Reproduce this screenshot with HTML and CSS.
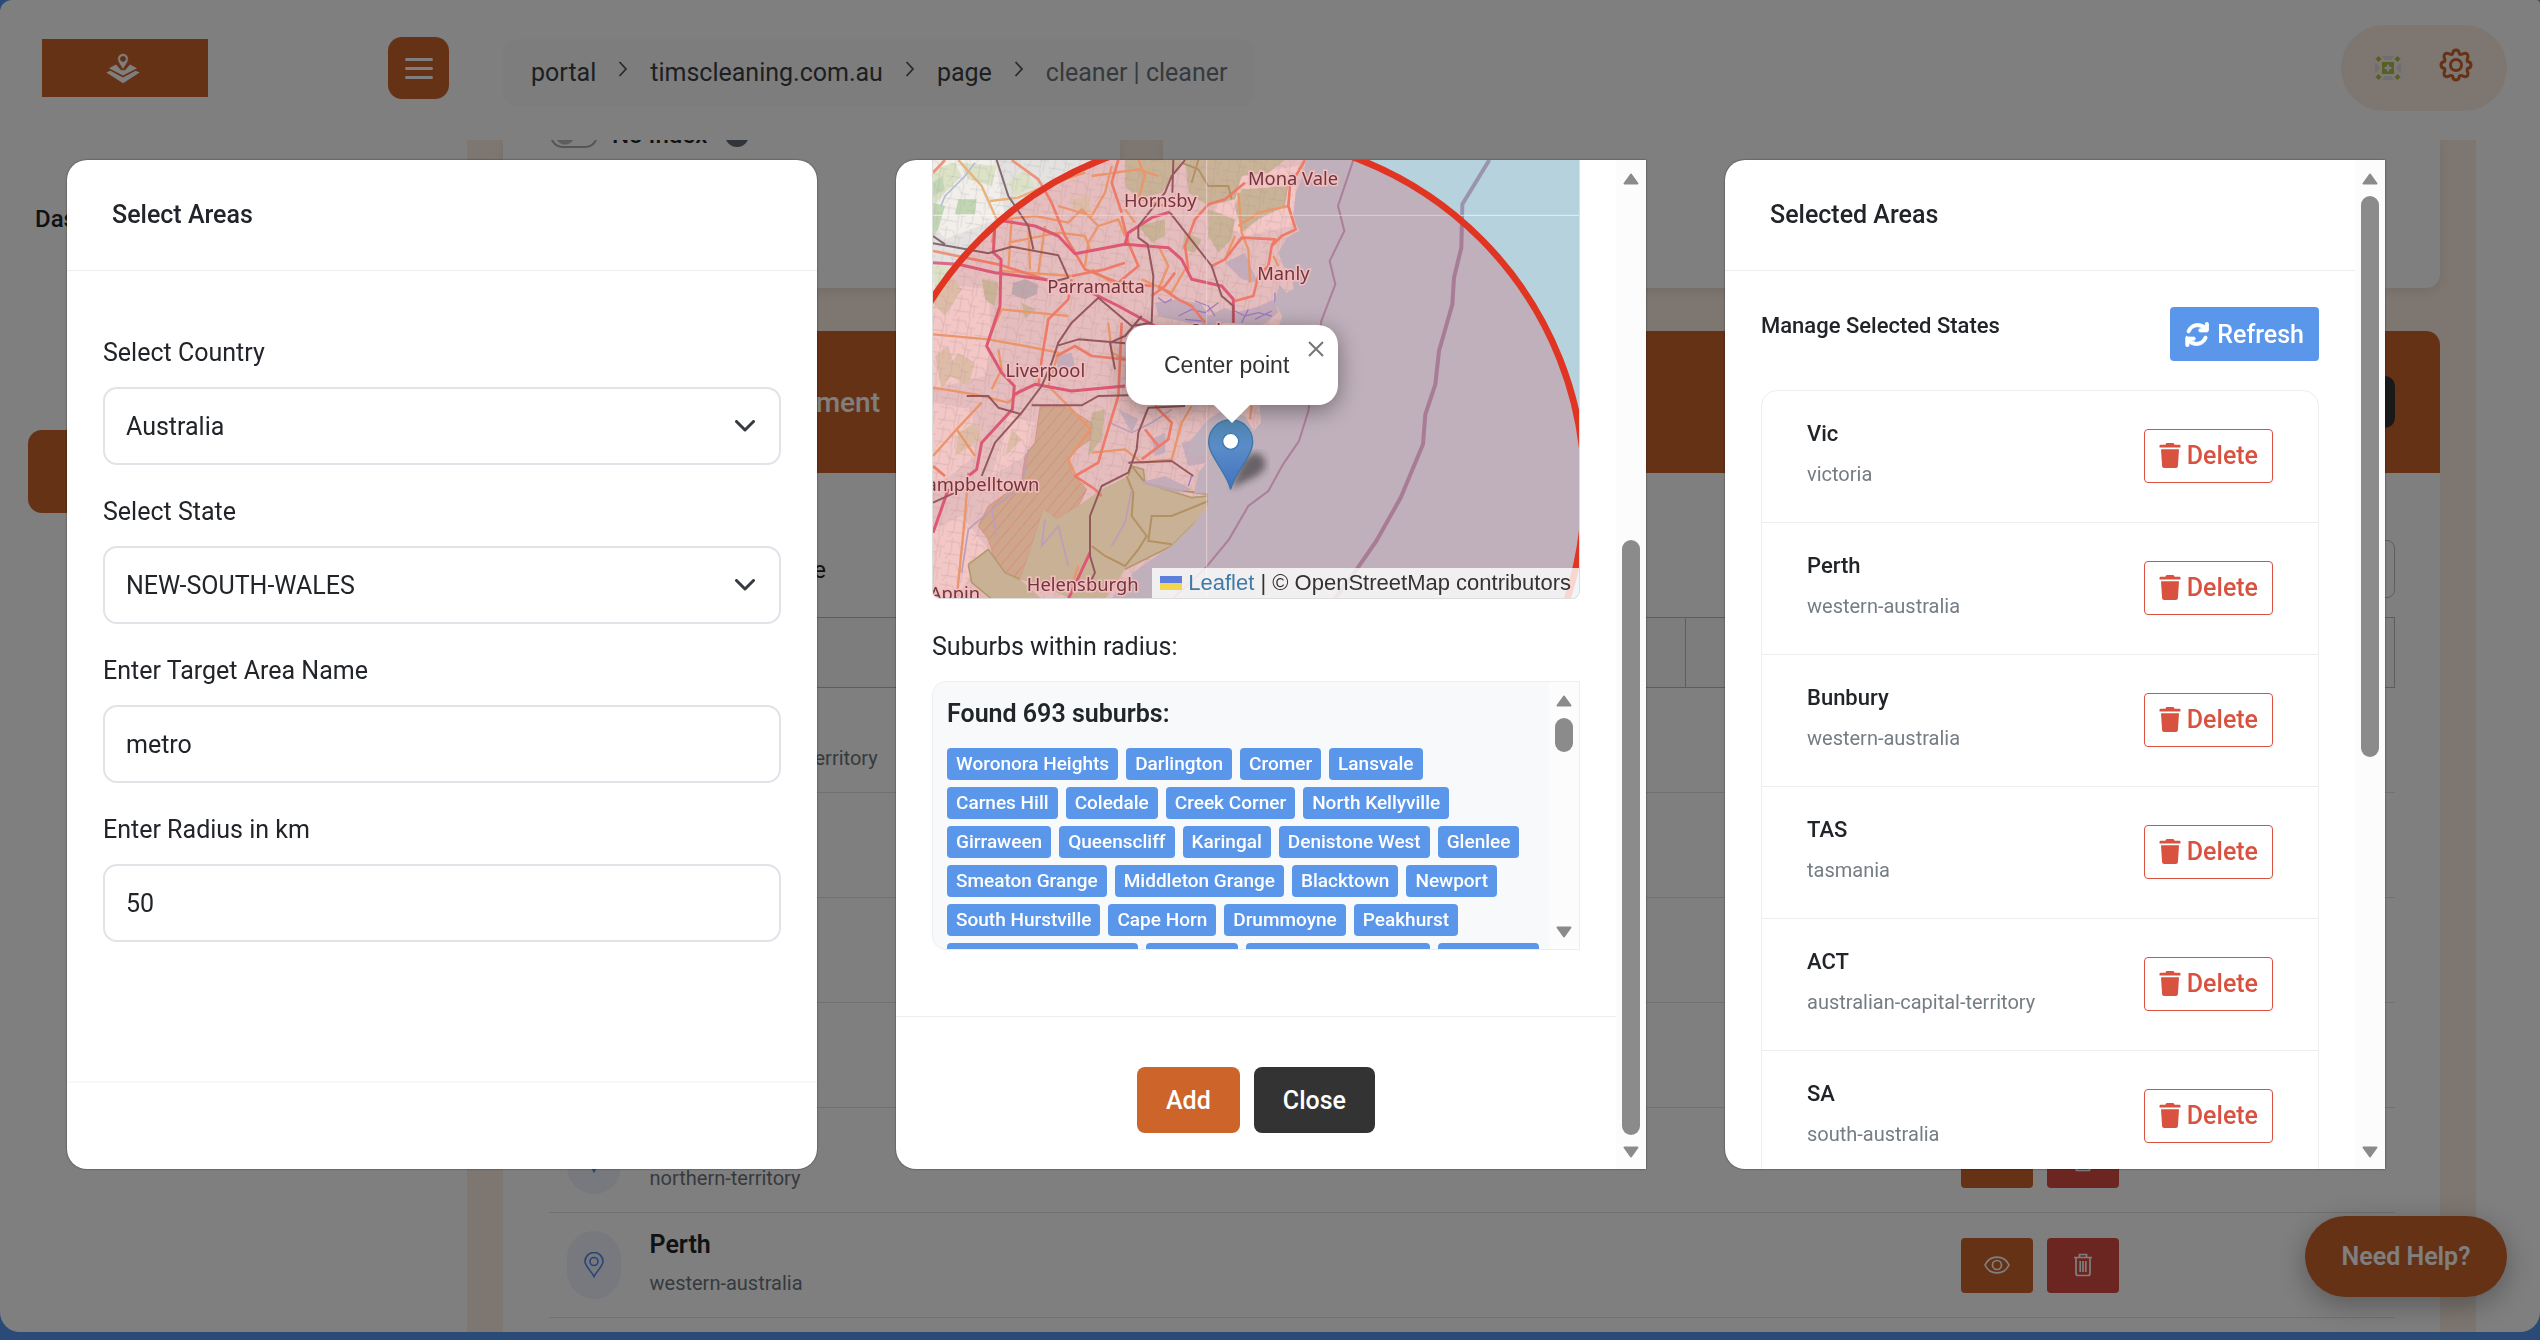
FILE: index.html
```html
<!DOCTYPE html>
<html lang="en">
<head>
<meta charset="utf-8">
<title>Areas</title>
<link rel="stylesheet" href="styles.css">
</head>
<body>
<svg class="defs" aria-hidden="true">
  <symbol id="trash" viewBox="0 0 22 25"><path d="M7.500 0h7l1.200 1.800H20.500a1 1 0 0 1 1 1v1.700H.5V2.800a1 1 0 0 1 1-1h4.800zM2 6.200h18l-1.100 17a2 2 0 0 1-2 1.800H5.100a2 2 0 0 1-2-1.800z" fill="currentColor"/></symbol>
  <symbol id="bin" viewBox="0 0 20 24"><path d="M1 4.500h18M6.500 4V1.500h7V4M3 5v15.500a2 2 0 0 0 2 2h10a2 2 0 0 0 2-2V5M7.200 8v11M10 8v11M12.800 8v11" fill="none" stroke="currentColor" stroke-width="1.700"/></symbol>
  <symbol id="eye" viewBox="0 0 26 18"><path d="M1 9C6-1.500 20-1.500 25 9 20 19.500 6 19.500 1 9z" fill="none" stroke="currentColor" stroke-width="1.700"/><circle cx="13" cy="9" r="4.500" fill="none" stroke="currentColor" stroke-width="1.700"/></symbol>
  <symbol id="pin" viewBox="0 0 20 26"><path d="M10 24.500C8 20 1 14 1 9.500a9 9 0 0 1 18 0C19 14 12 20 10 24.500z" fill="none" stroke="currentColor" stroke-width="1.600"/><circle cx="10" cy="9.500" r="4" fill="none" stroke="currentColor" stroke-width="1.600"/></symbol>
  <symbol id="chevron" viewBox="0 0 20 12"><path d="M1.500 1.500 10 10l8.500-8.500" fill="none" stroke="currentColor" stroke-width="3" stroke-linecap="round" stroke-linejoin="round"/></symbol>
  <symbol id="crumb" viewBox="0 0 10 16"><path d="M1.500 1 8 8l-6.500 7" fill="none" stroke="currentColor" stroke-width="1.800"/></symbol>
  <symbol id="up" viewBox="0 0 16 12"><path d="M8 1.500 14.500 10.500h-13z" fill="currentColor" stroke="currentColor" stroke-width="2" stroke-linejoin="round"/></symbol>
  <symbol id="down" viewBox="0 0 16 12"><path d="M8 10.500 14.500 1.500h-13z" fill="currentColor" stroke="currentColor" stroke-width="2" stroke-linejoin="round"/></symbol>
</svg>

<div class="shell">
  <header class="topbar">
    <div class="brand">
      <div class="logo">
        <svg width="34" height="31" viewBox="0 0 102 92"><path d="M9 45 30 34l15 17h12l15-17 21 11-42 22z" fill="#fff"/><path d="M1 58l12-5 38 20 38-20 12 5-50 32z" fill="#fff"/><path fill-rule="evenodd" d="M51 50C46 38 35 28 35 17a16 16 0 0 1 32 0C67 28 56 38 51 50zM51 9a8 8 0 1 0 .1 0z" fill="#fff" stroke="#cd652b" stroke-width="2"/></svg>
      </div>
      <button class="menu" aria-label="Menu"><i></i><i></i><i></i></button>
    </div>
    <nav class="crumbs">
      <a href="#">portal</a><svg class="sep"><use href="#crumb"/></svg>
      <a href="#">timscleaning.com.au</a><svg class="sep"><use href="#crumb"/></svg>
      <a href="#">page</a><svg class="sep"><use href="#crumb"/></svg>
      <span>cleaner | cleaner</span>
    </nav>
    <div class="tools">
      <svg width="26" height="24" viewBox="0 0 26 24"><path d="M7 0h12l-3 4h-6zM7 24h12l-3-4h-6zM0 6l5 6-5 6zM26 6l-5 6 5 6z" fill="#d8dde0"/><path d="M7 6h12v12H7z" fill="#b3bd4c"/><path d="M3.500 0 6.500 3l-3 3-3-3zM22.500 0l3 3-3 3-3-3zM3.500 18l3 3-3 3-3-3zM22.500 18l3 3-3 3-3-3z" fill="#b3bd4c"/><path d="M13 7.500l1.500 3 3 1.500-3 1.500-1.500 3-1.500-3-3-1.500 3-1.500z" fill="#eee"/></svg>
      <svg class="gear" width="34" height="34" viewBox="0 0 34 34"><path d="M17 2 Q20 2 20.500 6 Q22 7 25 5.500 Q29 4.500 29 9 Q27.500 12 28.500 13.500 Q32 14 32 17 Q32 20 28.500 20.500 Q27.500 22 29 25 Q29 29.500 25 28.500 Q22 27 20.500 28 Q20 32 17 32 Q14 32 13.500 28 Q12 27 9 28.500 Q5 29.500 5 25 Q6.500 22 5.500 20.500 Q2 20 2 17 Q2 14 5.500 13.500 Q6.500 12 5 9 Q5 4.500 9 5.500 Q12 7 13.500 6 Q14 2 17 2z"/><circle cx="17" cy="17" r="5.500"/></svg>
    </div>
  </header>

  <div class="columns">
    <aside class="sidebar">
      <p>Dashboard</p>
      <div class="side-active"></div>
    </aside>
    <main class="content">
      <div class="cards">
        <section class="card">
          <label class="noindex"><input type="checkbox" role="switch">No Index <i class="info"></i></label>
        </section>
        <section class="card"></section>
      </div>
      <section class="panel">
        <div class="panel-head"><h2>Area Management</h2><button class="dark" aria-label="Add"></button></div>
        <div class="filter"><label for="search">Search Area Name</label><input id="search" type="search"></div>
        <table>
          <thead><tr><th></th><th></th></tr></thead>
          <tbody>
            <tr><td><div class="place"><span class="dot"><svg><use href="#pin"/></svg></span><div><b>ACT</b><small>australian-capital-territory</small></div></div></td><td></td></tr>
            <tr><td></td><td></td></tr>
            <tr><td></td><td></td></tr>
            <tr><td></td><td></td></tr>
            <tr><td><div class="place"><span class="dot"><svg><use href="#pin"/></svg></span><div><b>NT</b><small>northern-territory</small></div></div></td><td><div class="acts"><button class="view" aria-label="View"><svg><use href="#eye"/></svg></button><button class="del" aria-label="Delete"><svg><use href="#bin"/></svg></button></div></td></tr>
            <tr><td><div class="place"><span class="dot"><svg><use href="#pin"/></svg></span><div><b>Perth</b><small>western-australia</small></div></div></td><td><div class="acts"><button class="view" aria-label="View"><svg><use href="#eye"/></svg></button><button class="del" aria-label="Delete"><svg><use href="#bin"/></svg></button></div></td></tr>
          </tbody>
        </table>
      </section>
    </main>
  </div>
  <button class="help">Need Help?</button>
</div>

<div class="overlay">
  <section class="modal">
    <div class="pane">
      <h3 class="title">Select Areas</h3>
      <form class="form">
        <label for="country">Select Country</label>
        <div class="select"><select id="country"><option>Australia</option></select><svg><use href="#chevron"/></svg></div>
        <label for="state">Select State</label>
        <div class="select"><select id="state"><option>NEW-SOUTH-WALES</option></select><svg><use href="#chevron"/></svg></div>
        <label for="area">Enter Target Area Name</label>
        <input id="area" type="text" value="metro">
        <label for="radius">Enter Radius in km</label>
        <input id="radius" type="text" value="50">
      </form>
      <div class="foot empty"></div>
    </div>
  </section>

  <section class="modal scrolls">
    <div class="pane">
      <div class="radius">
        <div class="map">
          <svg class="tiles" viewBox="24 12 1938 1317" preserveAspectRatio="xMinYMin slice">
            <defs>
              <pattern id="hatch" width="26" height="26" patternUnits="userSpaceOnUse" patternTransform="rotate(40)"><path d="M0 0V26" stroke="#d88a7c" stroke-width="5" opacity=".5"/></pattern>
              <pattern id="streets" width="74" height="66" patternUnits="userSpaceOnUse" patternTransform="rotate(8)"><path d="M0 12H40L48 30H74M20 0V44L6 66M54 0L50 66M0 50H50M62 30V66" fill="none" stroke="#aaa3a6" stroke-width="2" opacity=".45"/></pattern>
              <linearGradient id="pinfill" x1="0" y1="0" x2="0" y2="1"><stop offset="0" stop-color="#4f86ae"/><stop offset=".4" stop-color="#5a8cc8"/><stop offset="1" stop-color="#4272c0"/></linearGradient>
              <filter id="soft"><feGaussianBlur stdDeviation="11"/></filter>
              <clipPath id="landclip"><path d="M24 12H1142L1135 60 1112 110 1105 180 1122 225 1085 245 1060 290 1075 330 1102 350 1105 400 1085 410 1062 384 1050 440 1072 480 1058 520 1010 560 1000 700 1008 800 985 825 960 780 900 760 850 790 800 850 790 900 860 900 820 950 808 1012 848 1012 850 1050 800 1110 740 1170 650 1230 590 1280 560 1329H24z"/></clipPath>
            </defs>
            <path d="M0 0H2000V1400H0z" fill="#b5d2dd"/>
            <g clip-path="url(#landclip)">
              <path d="M0 0H1300V1400H0z" fill="#e4e2e0"/>
              <g fill="#f2eeea"><path d="M24 12H210L240 180 60 250 24 200zM24 380 190 400 200 560 180 660 24 700zM24 740 140 760 150 900 24 1000zM24 1120 110 1080 190 1180 90 1329 24 1329zM250 780 330 800 300 900 200 960zM440 1080 520 1020 480 1200 420 1240zM860 190 920 60 1120 30 1100 210 960 240z"/></g>
              <g fill="#dbe2c6"><path d="M24 40 90 20 110 60 60 110 24 150zM110 20 215 30 200 90 130 70zM60 330 110 400 60 480 24 440zM100 590 150 620 130 690 60 650zM24 330H70L30 400zM250 80 300 40 330 90 270 120zM30 600 70 570 90 640 50 700zM100 830 150 800 170 850 90 900zM430 130 490 120 500 170 450 160zM260 820 290 850 240 900z"/></g>
              <g fill="#c1d6b2"><path d="M600 12H770L740 70 710 110 640 130 600 90zM780 12H1080L1030 50 950 60 930 130 850 150 790 110zM950 100 1090 90 1080 150 1000 190 950 230 930 150zM850 160 930 190 920 250 880 290 850 240zM24 140 60 150 40 220 24 240zM640 210 720 190 720 240 680 260zM780 230 830 250 810 290 770 280zM290 440 330 460 300 490zM500 770 540 760 530 850 490 900zM170 370 220 380 210 450 180 430zM24 80 50 60 60 100 24 120zM100 130 155 130 150 175 90 175z"/></g>
              <path d="M265 380 300 370 338 385 335 415 300 430 260 415z" fill="#b4c8cb"/>
              <path d="M24 12H1150V1329H24z" fill="url(#streets)"/>
              <path d="M345 752 420 752 500 800 495 850 430 900 440 950 485 1000 460 1050 395 1090 355 1060 310 1200 285 1270 240 1250 205 1200 190 1150 160 1110 190 1050 290 980 300 900 330 860z" fill="#c8c6a5"/>
              <path d="M345 752 420 752 500 800 495 850 430 900 440 950 485 1000 460 1050 395 1090 355 1060 310 1200 285 1270 240 1250 205 1200 190 1150 160 1110 190 1050 290 980 300 900 330 860z" fill="url(#hatch)" stroke="#d5a08e" stroke-width="2"/>
              <path d="M355 1060 395 1090 460 1050 530 1000 610 960 620 930 655 940 660 980 720 1000 800 1025 850 1020 850 1060 740 1170 600 1240 540 1329H440L350 1290 285 1270 310 1200zM130 1225 190 1180 240 1250 285 1270 350 1329H200L140 1280z" fill="#c1d3b0"/>
              <path d="M130 1225 190 1180 240 1250 285 1270M610 960 620 930 655 940 660 980 720 1000 800 1025 850 1020 850 1060 740 1170 600 1240M130 1225 140 1280 200 1329" fill="none" stroke="#aab67f" stroke-width="5"/>
              <g fill="none" stroke="#a9ad74" stroke-width="6"><path d="M620 930 660 980 740 1000 850 1015M850 1035 740 1080 680 1080 670 1155 740 1165M500 1170 540 1200 600 1230 640 1180 665 1140 620 1080 625 1010 605 960M770 20 820 40 850 90 910 90 920 130M820 12 800 80"/></g>
              <g fill="#b5c9dc" opacity=".85"><path d="M690 440 760 430 830 445 850 480 900 455 930 470 990 455 1050 430 1060 470 1010 510 900 500 830 510 700 480zM900 320 960 290 980 340 1000 380 950 370zM390 600 440 590 450 630 400 640zM580 760 640 790 620 830zM680 850 720 830 720 890 690 900zM770 860 870 840 850 920 790 930zM640 980 720 960 800 1000 760 1010z"/></g>
              <g fill="none" stroke="#8c93e6" stroke-width="4"><path d="M700 425 720 440 740 430M810 435 850 450 870 480M760 480 800 460 840 470 880 440M930 465 960 480 1000 470 1040 480M950 500 970 460M1050 410 1050 440M780 490 830 495M990 490 1040 465M800 960 790 990"/></g>
              <g fill="none" stroke="#b3bcd8" stroke-width="5"><path d="M110 1250 130 1120 200 1060 290 990 310 880M360 1090 350 1170 400 1110 430 1230M620 1000 600 1100 560 1170M555 800 620 830 680 800 740 760M48 150 60 120 120 60 150 20M200 1060 215 1140"/></g>
              <g fill="none" stroke="#e9b27c" stroke-width="7" stroke-linejoin="round"><path d="M100 12 170 90 215 190 200 260M195 135 280 125 360 90 480 50M24 535 190 550 230 460 330 470 430 480M24 695 150 715 250 740 290 700M190 550 300 570 400 590 370 690 440 760 495 820 430 910 450 955M170 740 95 820 24 900M95 820 150 900M130 950 120 1080 95 1329M240 190 330 180 430 200 470 160 520 210 580 190 600 240M260 190 250 340M310 200 315 340M360 210 340 350M250 260 400 230 480 240 495 280M230 345 440 360M400 150 500 180 540 110 560 30M520 210 490 260 480 330M640 130 660 60 640 12M500 60 640 40 700 60M630 200 600 160M700 270 730 330 700 400M780 340 740 410 650 370M940 110 950 230 970 280 975 380M500 890 600 880 650 920 740 910 770 800 800 750M550 500 560 590 620 620M1045 300 1060 330M980 750 975 790M500 340 560 380 620 400M220 580 230 640 200 700M650 130 720 150M930 240 900 310M460 1230 440 1290M1090 150 1000 170 940 210"/></g>
              <g fill="none" stroke="#ee927a" stroke-width="8" stroke-linejoin="round"><path d="M260 12 340 70 380 140 420 240 480 340 580 380 680 390M24 285 220 325 360 370M24 50 60 12M440 370 430 430 370 490 350 610 340 690M395 600 450 570 500 600 600 610M590 500 580 720 540 850 520 920 450 960 510 1000 530 1020M850 145 810 190 780 270 790 340M850 145 900 130 960 80M1140 12 1095 90 1090 150 1112 220 1070 240 1040 270 1050 250 950 245 900 310 860 330M1040 270 1030 330 1000 360 985 420 930 435M590 180 610 260 640 330 580 380M700 390 760 430 800 450 840 500M690 750 740 800 730 850 650 910M440 360 540 340 600 320M580 12 560 80 590 170M750 350 720 390 680 420M24 930 60 960M660 820 700 870"/></g>
              <g fill="none" stroke="#d96a87" stroke-width="9" stroke-linejoin="round"><path d="M24 320 100 325 210 350 370 372M235 195 330 210 400 240 450 293 600 265 610 230 680 185 735 168M600 265 730 275 770 310 800 370 890 390 925 430 925 500M210 200 205 290 228 310 225 450 185 570 230 650 268 690 262 760 170 860 155 940 130 960M268 715 330 685 440 705 600 690M480 400 580 450 690 510M24 1130 70 1000M430 1329 495 1190"/></g>
              <g fill="none" stroke="#83696c" stroke-width="6" stroke-linejoin="round"><path d="M215 12 250 120 310 210 325 280M24 262 190 292 260 272 400 298 430 365 370 380M780 12 740 60 720 110 640 210 640 245 668 265 685 360 680 500 620 510 520 425 440 500 400 560 380 620 350 690 290 770 210 860 170 960M735 170 860 330 890 420 925 450 925 500M400 568 460 550 600 562M650 480 600 540 555 560 570 640M320 748 470 748 520 720 610 718M125 720 190 720 220 755 290 775M780 750 670 755 640 830 635 880 610 950 530 990 495 1080 495 1200 510 1250 490 1290M610 920 740 915 805 960M24 1040 90 1010M24 240 60 265M745 12 742 110"/></g>
            </g>
            <path d="M1285 12 1239 150 1258 225 1214 315 1231 385 1189 495 1170 640 1150 765 1122 855 1074 925 1030 1005 970 1050 912 1150 838 1240 742 1329" fill="none" stroke="#9c88a6" stroke-width="6" opacity=".8"/>
            <path d="M1693 12 1612 145 1609 275 1587 365 1582 445 1542 585 1531 685 1501 775 1494 865 1427 1025 1354 1155 1295 1240 1229 1329" fill="none" stroke="#9384a4" stroke-width="12" stroke-linejoin="round" opacity=".8"/>
            <path d="M845 12V1329M24 178H1962" stroke="#f4ffff" stroke-width="3" opacity=".7"/>
            <g class="towns" text-anchor="middle"><text x="1104" y="87">Mona Vale</text><text x="706" y="153">Hornsby</text><text x="1075" y="373">Manly</text><text x="513" y="410">Parramatta</text><text x="361" y="663">Liverpool</text><text x="156" y="1004">Campbelltown</text><text x="473" y="1305">Helensburgh</text><text x="90" y="1332">Appin</text><text x="888" y="542">Sydney</text></g>
            <circle cx="917" cy="1000" r="1062" fill="#f4000c" fill-opacity=".16" stroke="#e03522" stroke-width="20"/>
            <path d="M917 998 950 920Q990 870 1015 905T975 970z" fill="#222" opacity=".55" filter="url(#soft)"/>
            <path d="M917 1000C905 950 851 900 851 857a66 66 0 0 1 132 0C983 900 929 950 917 1000z" fill="url(#pinfill)" stroke="#3e76a6" stroke-width="4"/>
            <circle cx="917" cy="856" r="24" fill="#fff" stroke="#3c79b4" stroke-width="4"/>
          </svg>
          <div class="popup">Center point<button aria-label="Close popup"><svg viewBox="0 0 16 16"><path d="M1 1l14 14M15 1 1 15" stroke="currentColor" stroke-width="2"/></svg></button></div>
          <div class="credit"><svg width="22" height="14"><path d="M0 0h22v7H0z" fill="#5f7fdc"/><path d="M0 7h22v7H0z" fill="#f3d54e"/></svg><a href="#">Leaflet</a> | © OpenStreetMap contributors</div>
        </div>
        <p class="caption">Suburbs within radius:</p>
        <div class="suburbs">
          <div class="found">
            <strong>Found 693 suburbs:</strong>
            <div class="tags">
              <div><span>Woronora Heights</span><span>Darlington</span><span>Cromer</span><span>Lansvale</span></div>
              <div><span>Carnes Hill</span><span>Coledale</span><span>Creek Corner</span><span>North Kellyville</span></div>
              <div><span>Girraween</span><span>Queenscliff</span><span>Karingal</span><span>Denistone West</span><span>Glenlee</span></div>
              <div><span>Smeaton Grange</span><span>Middleton Grange</span><span>Blacktown</span><span>Newport</span></div>
              <div><span>South Hurstville</span><span>Cape Horn</span><span>Drummoyne</span><span>Peakhurst</span></div>
              <div><span>Macquarie Links Hill</span><span>Bexley N</span><span>Wetherill Park West</span><span>Five Dock</span></div>
            </div>
          </div>
          <div class="bar short"><svg><use href="#up"/></svg><i></i><svg><use href="#down"/></svg></div>
        </div>
      </div>
      <div class="foot"><button class="add">Add</button><button class="close">Close</button></div>
    </div>
    <div class="bar low"><svg><use href="#up"/></svg><i></i><svg><use href="#down"/></svg></div>
  </section>

  <section class="modal scrolls">
    <div class="pane">
      <h3 class="title">Selected Areas</h3>
      <div class="manage">
        <div class="manage-head"><h4>Manage Selected States</h4>
          <button class="refresh"><svg viewBox="0 0 512 512"><path d="M105 203c22-63 82-107 151-107 41 0 79 16 108 43l-52 0c-18 0-32 14-32 32s14 32 32 32H448c18 0 32-14 32-32V35c0-18-14-32-32-32s-32 14-32 32v51C374 50 317 32 256 32 160 32 76 93 45 182c-6 17 3 35 20 41s34-3 40-20zM39 289c-14 3-23 16-23 31v155c0 18 14 32 32 32s32-14 32-32v-49c43 35 99 54 160 54 96 0 180-61 211-150 6-17-3-35-20-41s-35 3-41 20c-22 63-81 107-150 107-41 0-80-16-109-43l49 0c18 0 32-14 32-32s-14-32-32-32H48c-3 0-6-1-9 0z" fill="currentColor" stroke="currentColor" stroke-width="18"/></svg>Refresh</button></div>
        <ul class="states">
          <li><div><b>Vic</b><small>victoria</small></div><button><svg><use href="#trash"/></svg>Delete</button></li>
          <li><div><b>Perth</b><small>western-australia</small></div><button><svg><use href="#trash"/></svg>Delete</button></li>
          <li><div><b>Bunbury</b><small>western-australia</small></div><button><svg><use href="#trash"/></svg>Delete</button></li>
          <li><div><b>TAS</b><small>tasmania</small></div><button><svg><use href="#trash"/></svg>Delete</button></li>
          <li><div><b>ACT</b><small>australian-capital-territory</small></div><button><svg><use href="#trash"/></svg>Delete</button></li>
          <li><div><b>SA</b><small>south-australia</small></div><button><svg><use href="#trash"/></svg>Delete</button></li>
        </ul>
      </div>
    </div>
    <div class="bar high"><svg><use href="#up"/></svg><i></i><svg><use href="#down"/></svg></div>
  </section>
</div>
</body>
</html>
```
FILE: styles.css
```css
* { box-sizing: border-box; }
body {
  margin: 0;
  height: 100vh;
  overflow: hidden;
  padding-bottom: 8px;
  background: #5496ee;
  font-family: Roboto, sans-serif;
  font-size: 25px;
  color: #212529;
}
h2, h3, h4, p, ul { margin: 0; padding: 0; }
button, input, select { font: inherit; color: inherit; border: 0; margin: 0; }
button { padding: 0; display: flex; align-items: center; justify-content: center; }
a { color: inherit; text-decoration: none; }
svg { display: block; flex: none; }
.defs { position: absolute; width: 0; height: 0; }

/* page behind the dialogs */
.shell {
  height: 100%;
  display: flex;
  flex-direction: column;
  background: #fff;
  border-radius: 12px 4px 20px 20px;
  overflow: hidden;
}
.topbar {
  flex: none;
  height: 140px;
  padding: 25px 33px 0 42px;
  display: flex;
  align-items: flex-start;
}
.brand { width: 407px; padding-top: 12px; display: flex; justify-content: space-between; }
.logo { width: 166px; height: 58px; margin-top: 2px; padding-right: 4px; background: #cd652b; display: flex; align-items: center; justify-content: center; }
.menu { width: 61px; height: 62px; border-radius: 14px; background: #cd652b; flex-direction: column; gap: 6px; }
.menu i { width: 28px; height: 3px; border-radius: 2px; background: #fff; }
.crumbs {
  height: 67px;
  margin: 14px auto 0 54px;
  padding: 0 28px;
  display: flex;
  align-items: center;
  gap: 22px;
  border-radius: 14px;
  background: #fafafa;
  color: #3a3f45;
}
.crumbs span { color: #6c757d; }
.sep { width: 10px; height: 16px; margin-bottom: 8px; color: #555; }
.tools { width: 166px; height: 86px; padding: 0 34px; border-radius: 43px; background: #fbede2; display: flex; align-items: center; justify-content: space-between; }
.gear { fill: none; stroke: #cd652b; stroke-width: 3; margin-bottom: 6px; }
.columns { flex: 1; min-height: 0; display: flex; }
.sidebar { width: 467px; flex: none; padding: 64px 28px 0; font-size: 24px; font-weight: 500; }
.sidebar p { line-height: 30px; padding-left: 7px; }
.side-active { margin-top: 196px; height: 83px; border-radius: 14px; background: #cd652b; }
.content { flex: 1; margin-right: 64px; padding: 0 36px; display: flex; flex-direction: column; background: #fbede2; overflow: hidden; }
.cards { flex: none; display: grid; grid-template-columns: 617fr 1277fr; gap: 43px; height: 148px; }
.card { background: #fff; border-radius: 0 0 14px 14px; box-shadow: 0 4px 10px rgba(0, 0, 0, .08); overflow: hidden; }
.noindex { display: flex; align-items: center; height: 30px; margin-top: -20px; padding-left: 47px; font-size: 24px; font-weight: 500; }
.noindex input { appearance: none; width: 48px; height: 26px; margin-right: 14px; border: 2px solid #aaa; border-radius: 13px; background: radial-gradient(circle at 13px 11px, #bbb 9px, #fff 10px); }
.info { width: 24px; height: 24px; margin-left: 18px; border-radius: 12px; background: #5e6a75; }
.panel { flex: 1 0 auto; margin-top: 43px; background: #fff; border-radius: 14px 14px 0 0; overflow: hidden; }
.panel-head { height: 142px; padding: 0 45px 0 167px; background: #cd652b; display: flex; align-items: center; justify-content: space-between; }
.panel-head h2 { width: 210px; display: flex; justify-content: flex-end; white-space: nowrap; font-size: 28px; font-weight: 500; color: #fff; }
.dark { width: 120px; height: 52px; border-radius: 10px; background: #333; }
.filter { height: 144px; padding: 0 45px; display: flex; align-items: center; justify-content: space-between; font-weight: 400; }
.filter label { width: 278px; display: flex; justify-content: flex-end; padding-top: 50px; font-size: 24px; }
.filter input { width: 400px; height: 58px; margin-top: 48px; border: 1px solid #bbb; border-radius: 8px; align-self: center; }
.panel table { width: calc(100% - 90px); margin: 0 45px; border-collapse: collapse; table-layout: fixed; }
.panel th { height: 70px; padding: 0; border: 1px solid #bbb; background: #fafafa; }
.panel th:first-child { width: 61.6%; }
.panel td { height: 105px; padding: 0; border-bottom: 1px solid #e2e2e2; }
.place { display: flex; align-items: center; gap: 29px; padding-left: 18px; }
.place b { display: block; font-size: 25px; font-weight: 600; line-height: 36px; }
.place small { display: block; font-size: 20px; line-height: 40px; color: #6c757d; }
.dot { width: 54px; height: 68px; display: flex; align-items: center; justify-content: center; border-radius: 34px; background: #eef2fd; color: #5088ea; }
.dot svg { width: 20px; height: 26px; }
.acts { display: flex; justify-content: center; gap: 14px; color: #fff; }
.acts button { width: 72px; height: 55px; border-radius: 4px; }
.view { background: #cd652b; }
.del { background: #d84d42; }
.view svg { width: 26px; height: 18px; }
.del svg { width: 20px; height: 24px; }
.help {
  position: absolute;
  right: 33px;
  bottom: 43px;
  width: 202px;
  height: 81px;
  border-radius: 41px;
  background: #cd652b;
  color: #fff;
  font-weight: 600;
  box-shadow: 0 8px 30px rgba(0, 0, 0, .3);
}

/* dialogs */
.overlay {
  position: fixed;
  inset: 0;
  padding: 160px 155px 171px 67px;
  display: grid;
  grid-template-columns: 750fr 750fr 660fr;
  grid-template-rows: 100%;
  gap: 79px;
  background: rgba(0, 0, 0, .5);
}
.modal { display: flex; background: #fff; border-radius: 20px; overflow: hidden; box-shadow: 0 0 2px rgba(0, 0, 0, .6); }
.scrolls { border-radius: 20px 0 0 20px; }
.pane { flex: 1; min-width: 0; display: flex; flex-direction: column; overflow: hidden; }
.title { flex: none; height: 111px; padding-left: 45px; line-height: 109px; font-size: 25px; font-weight: 500; border-bottom: 1px solid #eee; }
.form { flex: 1; padding: 62px 36px 0; }
.form label { display: block; height: 54px; line-height: 40px; }
.form input, .form select {
  display: block;
  width: 100%;
  height: 78px;
  padding: 0 21px;
  border: 2px solid #e1e3e8;
  border-radius: 14px;
  background: #fff;
  appearance: none;
}
.form input, .select { margin-bottom: 27px; }
.select { position: relative; }
.select svg { position: absolute; right: 26px; top: 33px; width: 20px; height: 12px; color: #343a40; }
.foot { flex: none; height: 153px; display: flex; align-items: center; justify-content: center; gap: 14px; border-top: 1px solid #eee; font-weight: 500; color: #fff; padding-top: 14px; }
.empty { height: 88px; border-top: 2px solid #f8f8f8; }
.foot button { height: 66px; padding: 0 29px; border-radius: 8px; }
.add { background: #cd652b; }
.close { background: #333; }

/* scroll bars */
.bar { width: 30px; flex: none; display: flex; flex-direction: column; align-items: center; padding: 13px 0 11px; gap: 11px; background: #fcfcfc; color: #8b8b8b; }
.bar svg { width: 16px; height: 12px; }
.bar i { width: 18px; border-radius: 9px; background: #8b8b8b; }
.bar svg:last-child { margin-top: auto; }
.low i { flex: 1; margin-top: 344px; }
.high i { height: 57%; }
.short i { height: 34px; }

.radius { flex: 1; padding: 0 36px; }
.map { position: relative; height: 439px; border: 1px solid #ddd; border-top: 0; border-radius: 0 0 8px 8px; overflow: hidden; font-family: "Liberation Sans", sans-serif; color: #333; }
.tiles { width: 100%; height: 439px; }
.towns { font: 55px "Noto Sans", sans-serif; fill: #5a4046; stroke: #f2e2e2; stroke-width: 9px; paint-order: stroke; }
.popup { position: absolute; left: 193px; top: 165px; width: 212px; height: 80px; padding-left: 38px; line-height: 80px; font-size: 23px; background: #fff; border-radius: 20px; box-shadow: 0 5px 22px rgba(0, 0, 0, .4); }
.popup::after { content: ""; position: absolute; left: 87px; top: 79px; border: 19px solid transparent; border-top-color: #fff; border-bottom: 0; }
.popup button { position: absolute; right: 14px; top: 16px; background: none; color: #757575; }
.popup button svg { width: 16px; height: 16px; }
.credit { position: absolute; right: 0; bottom: 0; height: 30px; padding: 0 8px; line-height: 30px; font-size: 22px; background: rgba(255, 255, 255, .8); white-space: nowrap; }
.credit svg { display: inline-block; margin-right: 6px; }
.credit a { color: #3e7ba8; }
.caption { height: 82px; line-height: 96px; }
.suburbs { height: 269px; display: flex; border: 1px solid #eceef0; border-radius: 14px 0 0 14px; overflow: hidden; background: #f8f9fb; }
.found { flex: 1; min-width: 0; padding-left: 14px; }
.found strong { display: block; height: 66px; line-height: 64px; font-weight: 600; }
.tags { display: grid; gap: 7px; }
.tags div { display: flex; gap: 8px; }
.tags span { height: 32px; padding: 0 9px; line-height: 31px; border-radius: 4px; background: #5a97eb; color: #fff; font-size: 19px; font-weight: 500; white-space: nowrap; }

.manage { padding: 36px 36px 0; }
.manage-head { height: 83px; display: flex; justify-content: space-between; align-items: flex-start; }
.manage h4 { line-height: 38px; font-size: 22px; font-weight: 500; }
.refresh { height: 54px; padding: 0 15px; gap: 7px; border-radius: 4px; background: #5a97eb; color: #fff; font-weight: 500; }
.refresh svg { width: 25px; height: 25px; }
.states { list-style: none; border: 1px solid #eee; border-radius: 16px 16px 0 0; }
.states li { height: 132px; display: flex; align-items: center; justify-content: space-between; padding: 0 45px 2px; border-bottom: 1px solid #eee; }
.states b { display: block; font-size: 22px; font-weight: 500; line-height: 40px; }
.states small { display: block; font-size: 20px; line-height: 40px; margin-bottom: 4px; color: #757d84; }
.states button { height: 54px; padding: 0 14px; gap: 6px; border: 1px solid #d9523f; border-radius: 4px; background: #fff; color: #d9523f; font-weight: 500; }
.states button svg { width: 22px; height: 25px; }
```
